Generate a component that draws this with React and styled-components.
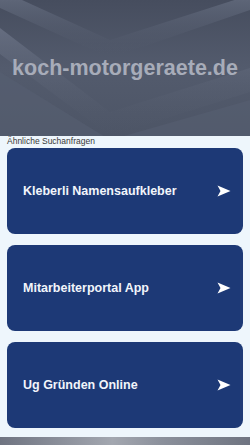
import React from 'react';
import styled, { createGlobalStyle } from 'styled-components';

const GlobalStyle = createGlobalStyle`
    html, body {
        margin: 0;
        padding: 0;
        background: #eef6fc;
        font-family: 'Liberation Sans', Arial, sans-serif;
    }
`;

const Page = styled.div`
    width: 250px;
    height: 445px;
    display: flex;
    flex-direction: column;
    overflow: hidden;
    background: #eef6fc;
`;

const Header = styled.header`
    position: relative;
    height: 136px;
    flex-shrink: 0;
    display: flex;
    align-items: center;
    justify-content: center;
    background: #505869;
    overflow: hidden;
`;

const HeaderArt = styled.svg`
    position: absolute;
    inset: 0;
`;

const Domain = styled.h1`
    position: relative;
    margin: 0;
    font-size: 21.5px;
    font-weight: 700;
    color: #a7acb9;
    white-space: nowrap;
`;

const Main = styled.main`
    flex: 1;
    display: flex;
    flex-direction: column;
    padding: 0 7px;
`;

const Caption = styled.div`
    font-size: 8.5px;
    color: #3a3a3a;
    line-height: 10px;
    height: 12px;
`;

const List = styled.div`
    display: flex;
    flex-direction: column;
    gap: 11px;
`;

const Card = styled.a`
    height: 86px;
    border-radius: 8px;
    background: #1d3976;
    display: flex;
    align-items: center;
    justify-content: space-between;
    padding: 0 12px 0 16px;
    color: #f2f5fb;
    text-decoration: none;
    font-size: 12.5px;
    font-weight: 700;
`;

const Footer = styled.footer`
    margin-top: auto;
    height: 8px;
    background: linear-gradient(90deg, #6f7481 0%, #a3a7b0 45%, #8b909b 65%, #6f7481 100%);
`;

const Arrow = () => (
    <svg width="14" height="12" viewBox="0 0 14 12">
        <path d="M0.5 0.5 L13.5 6 L0.5 11.5 L3.5 6 Z" fill="#ffffff" />
    </svg>
);

const items = ['Kleberli Namensaufkleber', 'Mitarbeiterportal App', 'Ug Gründen Online'];

export default function App() {
    return (
        <Page>
            <GlobalStyle />
            <Header>
                <HeaderArt width="250" height="136" viewBox="0 0 250 136">
                    <defs>
                        <linearGradient id="band" x1="0" y1="0" x2="0" y2="1">
                            <stop offset="0" stopColor="#687083" stopOpacity="0.9" />
                            <stop offset="1" stopColor="#505869" stopOpacity="0" />
                        </linearGradient>
                        <linearGradient id="fade" x1="0" y1="0" x2="0" y2="1">
                            <stop offset="0" stopColor="#464d5e" />
                            <stop offset="0.5" stopColor="#535b6d" />
                            <stop offset="1" stopColor="#4d5566" />
                        </linearGradient>
                    </defs>
                    <rect width="250" height="136" fill="url(#fade)" />
                    <path d="M0 -10 L110 40 L250 -5 L250 10 L110 58 L0 8 Z" fill="url(#band)" />
                    <path d="M0 28 L110 112 L250 68 L250 92 L110 136 L0 54 Z" fill="url(#band)" />
                    <path d="M0 72 L110 140 L250 100 L250 136 L0 136 Z" fill="#575f72" opacity="0.6" />
                </HeaderArt>
                <Domain>koch-motorgeraete.de</Domain>
            </Header>
            <Main>
                <Caption>Ähnliche Suchanfragen</Caption>
                <List>
                    {items.map((t) => (
                        <Card key={t} href="#">
                            <span>{t}</span>
                            <Arrow />
                        </Card>
                    ))}
                </List>
            </Main>
            <Footer />
        </Page>
    );
}
